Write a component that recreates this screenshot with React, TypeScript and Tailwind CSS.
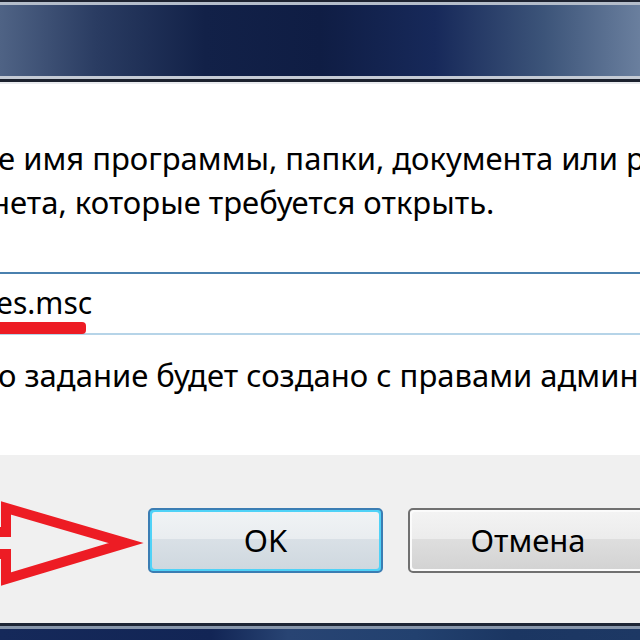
import React from "react";

export default function App() {
  return (
    <div className="relative w-[640px] h-[640px] overflow-hidden bg-white text-black font-['Noto_Sans',sans-serif]">
      {/* title bar */}
      <div className="flex flex-col h-[84px]">
        <div className="h-[2px] bg-[#1e2330]" />
        <div className="h-[3px] bg-[#b4bdca]" />
        <div className="h-[71px] bg-[linear-gradient(90deg,#4f6385_0%,#2a3c62_15%,#122148_32%,#0f1d44_50%,#17295a_68%,#3c5479_85%,#6a7f9e_100%)]" />
        <div className="h-[3px] bg-[#c4cad4]" />
        <div className="h-[3px] bg-[#1b212d]" />
        <div className="h-[2px] bg-[#e9ebee]" />
      </div>

      {/* content */}
      <div className="h-[371px] bg-white pt-[52px] text-[31px]">
        <div className="leading-[44px] whitespace-nowrap">
          <div className="ml-[-2px]">е имя программы, папки, документа или ресурса</div>
          <div className="ml-[-9px]">нета, которые требуется открыть.</div>
        </div>
        <div className="mt-[48px] h-[63px] border-t-2 border-b-2 border-t-[#4a80ae] border-b-[#b6d4e8] flex items-center whitespace-nowrap text-[30px]">
          <span className="ml-[-4px] pb-[2px]">es.msc</span>
        </div>
        <div className="mt-[18px] leading-[44px] whitespace-nowrap ml-[-2px]">
          о задание будет создано с правами администратора.
        </div>
      </div>

      {/* footer */}
      <div className="h-[168px] bg-[#f0f0f0] pt-[53px] flex items-start gap-[25px] pl-[148px] text-[31px]">
        <div className="w-[235px] h-[65px] shrink-0 rounded-[5px] border-2 border-[#3b7db3] p-[2px] bg-[#4fd2f7]">
          <div className="w-full h-full rounded-[3px] flex items-center justify-center bg-[linear-gradient(180deg,#f0f3f5_0%,#e9edf0_47%,#d9e0e6_48%,#cfd8df_100%)]">
            OK
          </div>
        </div>
        <div className="w-[240px] h-[65px] shrink-0 rounded-[5px] border-2 border-[#707070] p-[2px] bg-[#fbfbfb]">
          <div className="w-full h-full rounded-[3px] flex items-center justify-center bg-[linear-gradient(180deg,#f3f3f3_0%,#ececec_47%,#dedede_48%,#d3d3d3_100%)]">
            Отмена
          </div>
        </div>
      </div>

      {/* bottom frame */}
      <div className="flex flex-col h-[17px]">
        <div className="h-[3px] bg-[#1d2535]" />
        <div className="h-[3px] bg-[#8796ab]" />
        <div className="flex-1 bg-[linear-gradient(90deg,#15295a_0%,#122555_33%,#284473_45%,#22416f_65%,#1b3662_80%,#1d3864_100%)]" />
      </div>

      {/* red underline annotation */}
      <div className="absolute left-0 top-[322px] w-[86px] h-[12px] bg-[#ed1c24] rounded-r-[4px]" />

      {/* red arrow annotation */}
      <svg className="absolute left-0 top-[490px]" width="160" height="110" viewBox="0 0 160 110">
        <polygon
          points="-60,42 6,42 6,18 126,53 6,89 6,64 -60,64"
          fill="none"
          stroke="#ed1c24"
          strokeWidth="10"
          strokeLinejoin="miter"
        />
      </svg>
    </div>
  );
}
